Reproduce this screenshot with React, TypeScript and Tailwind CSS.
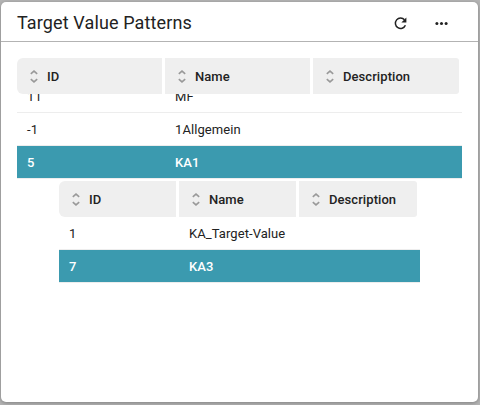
import React from "react";

function SortIcon() {
  return (
    <svg width="8" height="13" viewBox="0 0 8 13" fill="none" stroke="#999999" strokeWidth="1.6" className="-mt-px shrink-0">
      <path d="M0.8 3.9 4 1.1l3.2 2.8M0.8 9.1l3.2 2.8 3.2-2.8" />
    </svg>
  );
}

function HeaderCell({ label, className }: { label: string; className: string }) {
  return (
    <div className={`flex h-9 items-center gap-[9px] bg-[#efefef] pl-[13px] pt-[2px] text-[13px] font-medium text-[#222222] ${className}`}>
      <SortIcon />
      <span className="tracking-[0.07px]">{label}</span>
    </div>
  );
}

function Row({ id, name, idWidth, selected = false }: { id: string; name: string; idWidth: string; selected?: boolean }) {
  const tone = selected ? "bg-[#3b9aaf] font-medium text-white" : "bg-white text-[#222222]";
  return (
    <div className={`flex h-[33px] shrink-0 items-center border-b border-[#ededed] pl-[10px] pt-[2px] text-[13px] tracking-[0.07px] ${tone}`}>
      <span className={idWidth}>{id}</span>
      <span>{name}</span>
    </div>
  );
}

export default function App() {
  return (
    <div className="h-[405px] w-[480px] bg-[#b5b5b5] px-px pt-[2px] font-['Roboto','Liberation_Sans',sans-serif]">
      <section className="h-[400px] w-[477px] overflow-hidden rounded-[5px] bg-white shadow-[0_1px_4px_rgba(0,0,0,0.3)]">
        <header className="flex h-10 items-center border-b border-[#b3b3b3] pl-4 text-[#222222]">
          <h1 className="grow pt-[2px] text-[18px] leading-6 tracking-[0.12px]">Target Value Patterns</h1>
          <button aria-label="Refresh" className="mr-[28px] mt-[3px]">
            <svg width="13" height="13" viewBox="0 0 13 13" fill="none" className="block">
              <path d="M10.5 2.8A5.2 5.2 0 1 0 11.4 8.2" stroke="#222222" strokeWidth="1.5" />
              <path d="M12.4 0.5v5H7.4Z" fill="#222222" />
            </svg>
          </button>
          <button aria-label="More" className="mr-[30px] mt-[4px]">
            <svg width="13" height="3" viewBox="0 0 13 3" fill="#222222" className="block">
              <circle cx="1.9" cy="1.5" r="1.5" />
              <circle cx="6.5" cy="1.5" r="1.5" />
              <circle cx="11.1" cy="1.5" r="1.5" />
            </svg>
          </button>
        </header>
        <div className="ml-4 mt-4 w-[445px]">
          <div className="flex gap-[3px]">
            <HeaderCell label="ID" className="w-[145px] rounded-l-md" />
            <HeaderCell label="Name" className="w-[145px]" />
            <HeaderCell label="Description" className="w-[146px] rounded-r-[3px]" />
          </div>
          <div className="flex h-[19px] flex-col justify-end overflow-hidden">
            <Row id="11" name="MF" idWidth="w-[148px]" />
          </div>
          <Row id="-1" name="1Allgemein" idWidth="w-[148px]" />
          <Row id="5" name="KA1" idWidth="w-[148px]" selected />
          <div className="ml-[42px] mt-[2px] w-[361px]">
            <div className="flex gap-[3px]">
              <HeaderCell label="ID" className="w-[117px] rounded-l-md" />
              <HeaderCell label="Name" className="w-[117px]" />
              <HeaderCell label="Description" className="w-[118px] rounded-r-[3px]" />
            </div>
            <Row id="1" name="KA_Target-Value" idWidth="w-[120px]" />
            <Row id="7" name="KA3" idWidth="w-[120px]" selected />
          </div>
        </div>
      </section>
    </div>
  );
}
